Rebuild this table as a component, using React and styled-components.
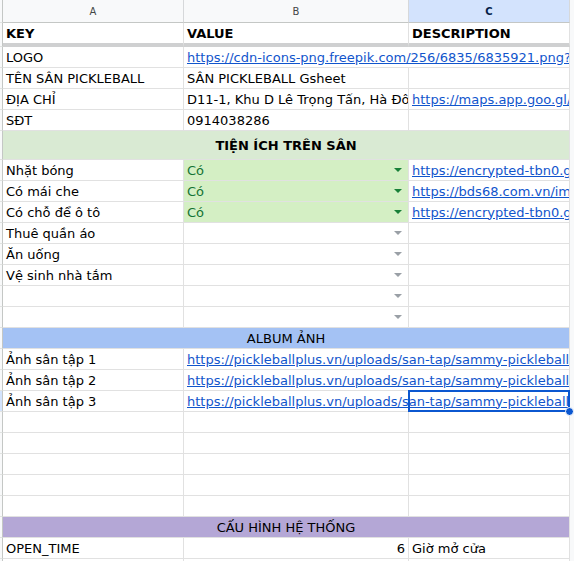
import React from 'react';
import styled, { createGlobalStyle } from 'styled-components';

const GlobalStyle = createGlobalStyle`
  html, body {
    margin: 0;
    padding: 0;
    background: #f8f9fa;
  }
  body {
    font-family: "DejaVu Sans", "Noto Sans", sans-serif;
    font-size: 13px;
    color: #000;
  }
`;

const GRID = '#e1e1e1';

const Sheet = styled.div`
  width: 570px;
  background: #fff;
  position: relative;
`;

const Row = styled.div`
  display: grid;
  grid-template-columns: 3px 181px 225px 161px;
  grid-template-rows: 100%;
  height: ${p => p.$height || 21}px;
`;

const RowHead = styled.div`
  grid-row: 1;
  box-sizing: border-box;
  background: ${p => (p.$selected ? '#d3e3fd' : '#f8f9fa')};
  border-right: 1px solid #c4c7c5;
  border-bottom: 1px solid #e1e3e1;
`;

const ColHead = styled.div`
  grid-row: 1;
  box-sizing: border-box;
  display: flex;
  align-items: center;
  justify-content: center;
  font-size: 10px;
  background: ${p => (p.$selected ? '#d3e3fd' : '#f8f9fa')};
  color: ${p => (p.$selected ? '#041e49' : '#444746')};
  font-weight: ${p => (p.$selected ? 700 : 400)};
  border-right: 1px solid #d6d8da;
  border-bottom: 1px solid #c4c7c5;
`;

const Cell = styled.div`
  box-sizing: border-box;
  grid-row: 1;
  grid-column: ${p => p.$col || (p.$span ? `span ${p.$span}` : 'auto')};
  display: flex;
  align-items: center;
  justify-content: ${p => p.$align || 'flex-start'};
  padding: 0 3px;
  overflow: hidden;
  white-space: nowrap;
  line-height: 1;
  background: ${p => p.$bg || '#fff'};
  color: ${p => p.$color || '#000'};
  font-weight: ${p => (p.$bold ? 700 : 400)};
  border-right: 1px solid ${GRID};
  border-bottom: ${p => (p.$frozen ? '4px solid #cfd0d1' : `1px solid ${GRID}`)};
`;

const Link = styled.span`
  color: #1155cc;
  text-decoration: underline;
`;

const Caret = styled.span`
  flex: none;
  width: 0;
  height: 0;
  margin-right: 3px;
  border-left: 4px solid transparent;
  border-right: 4px solid transparent;
  border-top: 4px solid ${p => p.$color};
`;

const Selection = styled.div`
  grid-column: 4;
  grid-row: 1;
  position: relative;
  z-index: 1;
  margin: -1px 0 0 -1px;
  border: 2px solid #0b57d0;
`;

const FillHandle = styled.span`
  position: absolute;
  right: -6px;
  bottom: -6px;
  width: 7px;
  height: 7px;
  border-radius: 50%;
  background: #0b57d0;
  border: 1px solid #fff;
`;

const info = [
  { key: 'LOGO', value: <Link>https://cdn-icons-png.freepik.com/256/6835/6835921.png?</Link>, spill: true },
  { key: 'TÊN SÂN PICKLEBALL', value: 'SÂN PICKLEBALL Gsheet' },
  { key: 'ĐỊA CHỈ', value: 'D11-1, Khu D Lê Trọng Tấn, Hà Đông', desc: <Link>https://maps.app.goo.gl/</Link> },
  { key: 'SĐT', value: '0914038286' },
];

const amenities = [
  { key: 'Nhặt bóng', value: 'Có', desc: 'https://encrypted-tbn0.gstatic.com' },
  { key: 'Có mái che', value: 'Có', desc: 'https://bds68.com.vn/images' },
  { key: 'Có chỗ để ô tô', value: 'Có', desc: 'https://encrypted-tbn0.gstatic.com' },
  { key: 'Thuê quần áo' },
  { key: 'Ăn uống' },
  { key: 'Vệ sinh nhà tắm' },
  { key: '' },
  { key: '' },
];

const albumUrl = 'https://pickleballplus.vn/uploads/san-tap/sammy-pickleball.jpg';

const Section = ({ title, bg, bold, height }) => (
  <Row $height={height}>
    <RowHead />
    <Cell $span={3} $align="center" $bg={bg} $bold={bold}>{title}</Cell>
  </Row>
);

const Blank = () => (
  <Row>
    <RowHead />
    <Cell />
    <Cell />
    <Cell />
  </Row>
);

export default function App() {
  return (
    <>
      <GlobalStyle />
      <Sheet>
        <Row $height={23}>
          <RowHead />
          <ColHead>A</ColHead>
          <ColHead>B</ColHead>
          <ColHead $selected>C</ColHead>
        </Row>
        <Row $height={24}>
          <RowHead />
          <Cell $bold $frozen>KEY</Cell>
          <Cell $bold $frozen>VALUE</Cell>
          <Cell $bold $frozen>DESCRIPTION</Cell>
        </Row>

        {info.map(r => (
          <Row key={r.key}>
            <RowHead />
            <Cell>{r.key}</Cell>
            <Cell $span={r.spill ? 2 : undefined}>{r.value}</Cell>
            {!r.spill && <Cell>{r.desc}</Cell>}
          </Row>
        ))}

        <Section title="TIỆN ÍCH TRÊN SÂN" bg="#d9ead3" bold height={29} />

        {amenities.map((r, i) => (
          <Row key={i}>
            <RowHead />
            <Cell>{r.key}</Cell>
            <Cell
              $align="space-between"
              $bg={r.value ? '#d4efc4' : '#fff'}
              $color="#137333"
            >
              <span>{r.value}</span>
              <Caret $color={r.value ? '#188038' : '#9aa0a6'} />
            </Cell>
            <Cell>{r.desc && <Link>{r.desc}</Link>}</Cell>
          </Row>
        ))}

        <Section title="ALBUM ẢNH" bg="#a4c2f4" />

        {[1, 2, 3].map(n => (
          <Row key={n}>
            <RowHead $selected={n === 3} />
            <Cell $col="2">Ảnh sân tập {n}</Cell>
            <Cell $col="3 / span 2"><Link>{albumUrl}</Link></Cell>
            {n === 3 && (
              <Selection>
                <FillHandle />
              </Selection>
            )}
          </Row>
        ))}

        <Blank />
        <Blank />
        <Blank />
        <Blank />
        <Blank />

        <Section title="CẤU HÌNH HỆ THỐNG" bg="#b4a7d6" />

        <Row>
          <RowHead />
          <Cell>OPEN_TIME</Cell>
          <Cell $align="flex-end">6</Cell>
          <Cell>Giờ mở cửa</Cell>
        </Row>
        <Blank />
      </Sheet>
    </>
  );
}
